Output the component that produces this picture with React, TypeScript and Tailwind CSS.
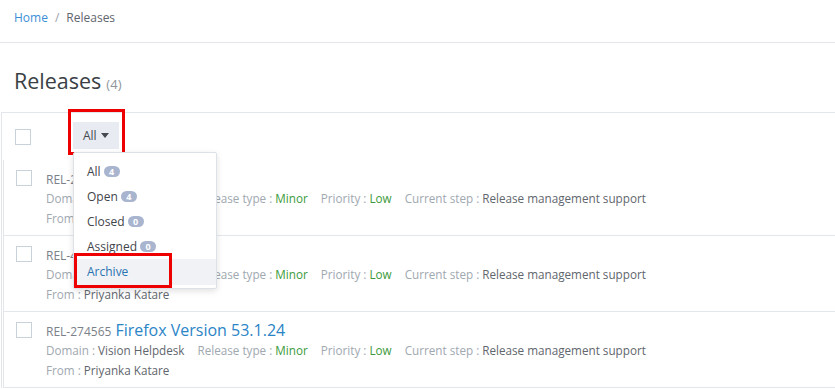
import React from "react";

const font = { fontFamily: '"Open Sans", "Noto Sans", sans-serif' };

type Release = { id: string; title: string };

const releases: Release[] = [
  { id: "REL-274568", title: "Chrome 58" },
  { id: "REL-474567", title: "Chrome 57" },
  { id: "REL-274565", title: "Firefox Version 53.1.24" },
];

const filters = [
  { label: "All", count: 4 },
  { label: "Open", count: 4 },
  { label: "Closed", count: 0 },
  { label: "Assigned", count: 0 },
];

function Checkbox() {
  return <span className="block w-4 h-4 border border-[#c9d1da] bg-white shrink-0" />;
}

function Badge({ n }: { n: number }) {
  return (
    <span className="ml-[3px] inline-flex items-center justify-center h-[11px] min-w-[16px] px-[3px] rounded-full bg-[#a9b5cf] text-white text-[9px] font-bold leading-none">
      {n}
    </span>
  );
}

function ReleaseRow({ r }: { r: Release }) {
  return (
    <div className="flex h-[76px] border-l border-b border-[#e3e7ec] pl-[12px] pt-[10px]">
      <Checkbox />
      <div className="ml-[14px] -mt-[2px] text-[11.7px] leading-[20px] text-[#6f7780]">
        <div className="flex items-baseline h-[20px]">
          <span className="text-[#7a8189] text-[12px]">{r.id}</span>
          <span className="ml-[4px] text-[16px] text-[#2b84c6]">{r.title}</span>
        </div>
        <div className="flex">
          <span className="mr-[13px]">
            <span className="text-[#a0a8b0]">Domain : </span>
            <span className="text-[#5f666d]">Vision Helpdesk</span>
          </span>
          <span className="mr-[13px]">
            <span className="text-[#a0a8b0]">Release type : </span>
            <span className="text-[#3b9a3b]">Minor</span>
          </span>
          <span className="mr-[13px]">
            <span className="text-[#a0a8b0]">Priority : </span>
            <span className="text-[#3b9a3b]">Low</span>
          </span>
          <span>
            <span className="text-[#a0a8b0]">Current step : </span>
            <span className="text-[#5f666d]">Release management support</span>
          </span>
        </div>
        <div>
          <span className="text-[#a0a8b0]">From : </span>
          <span className="text-[#5f666d]">Priyanka Katare</span>
        </div>
      </div>
    </div>
  );
}

export default function App() {
  return (
    <div className="w-[835px] h-[389px] overflow-hidden bg-white relative" style={font}>
      <div className="h-[43px] border-b border-[#e3e7ec] px-[14px] pt-[9px] text-[12px] leading-[17px]">
        <span className="text-[#3b8fd6]">Home</span>
        <span className="text-[#9aa1a8] mx-[7px]">/</span>
        <span className="text-[#5f666d]">Releases</span>
      </div>

      <div className="h-[69px] px-[14px] pt-[24px]">
        <span className="text-[21.5px] leading-[28px] text-[#3a3f45]">Releases</span>
        <span className="ml-[5px] text-[13px] text-[#8e959c]">(4)</span>
      </div>

      <div className="ml-px border-l border-t border-[#e3e7ec] w-[900px]">
        <div className="h-[47px] flex items-center pl-[13px] relative">
          <Checkbox />
          <div className="ml-[42px] h-[27px] px-[10px] flex items-center bg-[#e8ebf1] text-[12px] text-[#444a50] -mt-[2px]">
            All
            <svg width="8" height="5" viewBox="0 0 8 5" className="ml-[4px]">
              <path d="M0 0h8L4 5z" fill="#444a50" />
            </svg>
          </div>
        </div>
        <div className="ml-px">
          {releases.map((r) => (
            <ReleaseRow key={r.id} r={r} />
          ))}
        </div>
      </div>

      {/* red highlight around the filter button */}
      <div className="absolute left-[68px] top-[109px] w-[57px] h-[46px] border-[3px] border-[#ee0000]" />

      {/* dropdown menu */}
      <div className="absolute left-[73px] top-[152px] w-[144px] bg-white border border-[#dde2e8] rounded-[2px] shadow-[0_2px_6px_rgba(0,0,0,0.12)] pt-[6px] pb-[3px] text-[12px]">
        {filters.map((f) => (
          <div key={f.label} className="h-[25px] flex items-center px-[13px] text-[#3f454b]">
            {f.label}
            <Badge n={f.count} />
          </div>
        ))}
        <div className="h-[26px] flex items-center px-[13px] bg-[#f0f2f6] text-[#2a72b0]">Archive</div>
      </div>

      {/* red highlight around Archive */}
      <div className="absolute left-[74px] top-[253px] w-[98px] h-[35px] border-[3px] border-[#ee0000]" />
    </div>
  );
}
